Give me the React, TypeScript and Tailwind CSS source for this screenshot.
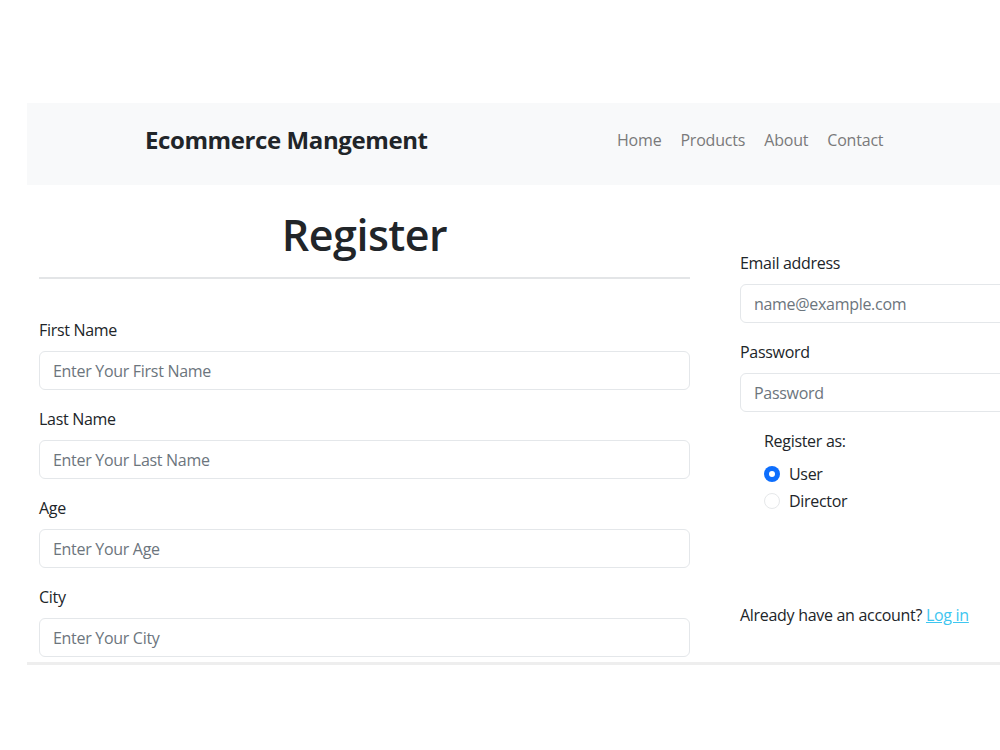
export default function App() {
  const leftFields = [
    { label: "First Name", placeholder: "Enter Your First Name" },
    { label: "Last Name", placeholder: "Enter Your Last Name" },
    { label: "Age", placeholder: "Enter Your Age" },
    { label: "City", placeholder: "Enter Your City" },
  ];

  return (
    <div
      className="w-[1000px] h-[750px] bg-white overflow-hidden pt-[103px] pl-[27px] text-[#212529]"
      style={{ fontFamily: '"Open Sans", "Noto Sans", sans-serif' }}
    >
      <div className="w-[1010px]">
        {/* navbar */}
        <nav className="h-[82px] bg-[#f8f9fa] flex items-center pl-[118px] pb-[8px]">
          <span className="text-[24px] font-bold tracking-[-0.4px] text-[#212529] w-[472px]">
            Ecommerce Mangement
          </span>
          <ul className="flex gap-[19px] text-[16px] text-[#7a7a7a] tracking-[-0.2px]">
            <li>Home</li>
            <li>Products</li>
            <li>About</li>
            <li>Contact</li>
          </ul>
        </nav>

        <div className="flex gap-[50px] pl-[12px] border-b-[3px] border-[#eeeeee]">
          {/* left column */}
          <div className="w-[651px] shrink-0">
            <h1 className="text-[43px] font-semibold text-center leading-none pt-[28px] pb-[21px] tracking-[-0.5px]">
              Register
            </h1>
            <div className="h-[2px] bg-[#e3e5e7]" />
            <div className="pt-[39px]">
              {leftFields.map((f) => (
                <div key={f.label} className="mb-[17px] last:mb-[5px]">
                  <label className="block text-[16px] leading-[24px] mb-[9px] tracking-[-0.3px]">
                    {f.label}
                  </label>
                  <div className="h-[39px] border border-[#e4e7ea] rounded-[6px] flex items-center px-[13px] text-[16px] text-[#6c757d] tracking-[-0.3px]">
                    {f.placeholder}
                  </div>
                </div>
              ))}
            </div>
          </div>

          {/* right column */}
          <div className="w-[300px] shrink-0 pt-[66px]">
            <label className="block text-[16px] leading-[24px] mb-[9px] tracking-[-0.3px]">
              Email address
            </label>
            <div className="h-[39px] border border-[#e4e7ea] rounded-[6px] flex items-center px-[13px] text-[16px] text-[#6c757d] tracking-[-0.3px] mb-[17px]">
              name@example.com
            </div>
            <label className="block text-[16px] leading-[24px] mb-[9px] tracking-[-0.3px]">
              Password
            </label>
            <div className="h-[39px] border border-[#e4e7ea] rounded-[6px] flex items-center px-[13px] text-[16px] text-[#6c757d] tracking-[-0.3px]">
              Password
            </div>

            <div className="pl-[24px] pt-[17px] tracking-[-0.3px]">
              <div className="text-[16px] leading-[24px] mb-[7px]">Register as:</div>
              <div className="flex items-center gap-[9px] h-[27px]">
                <span className="w-[16px] h-[16px] rounded-full bg-[#0d6efd] flex items-center justify-center">
                  <span className="w-[6px] h-[6px] rounded-full bg-white" />
                </span>
                <span className="text-[16px]">User</span>
              </div>
              <div className="flex items-center gap-[9px] h-[27px]">
                <span className="w-[16px] h-[16px] rounded-full border border-[#e6e8ea]" />
                <span className="text-[16px]">Director</span>
              </div>
            </div>

            <div className="pt-[89px] text-[16px] leading-[24px] tracking-[-0.3px]">
              Already have an account?{" "}
              <a className="text-[#3ec6f0] underline">Log in</a>
            </div>
          </div>
        </div>
      </div>
    </div>
  );
}
